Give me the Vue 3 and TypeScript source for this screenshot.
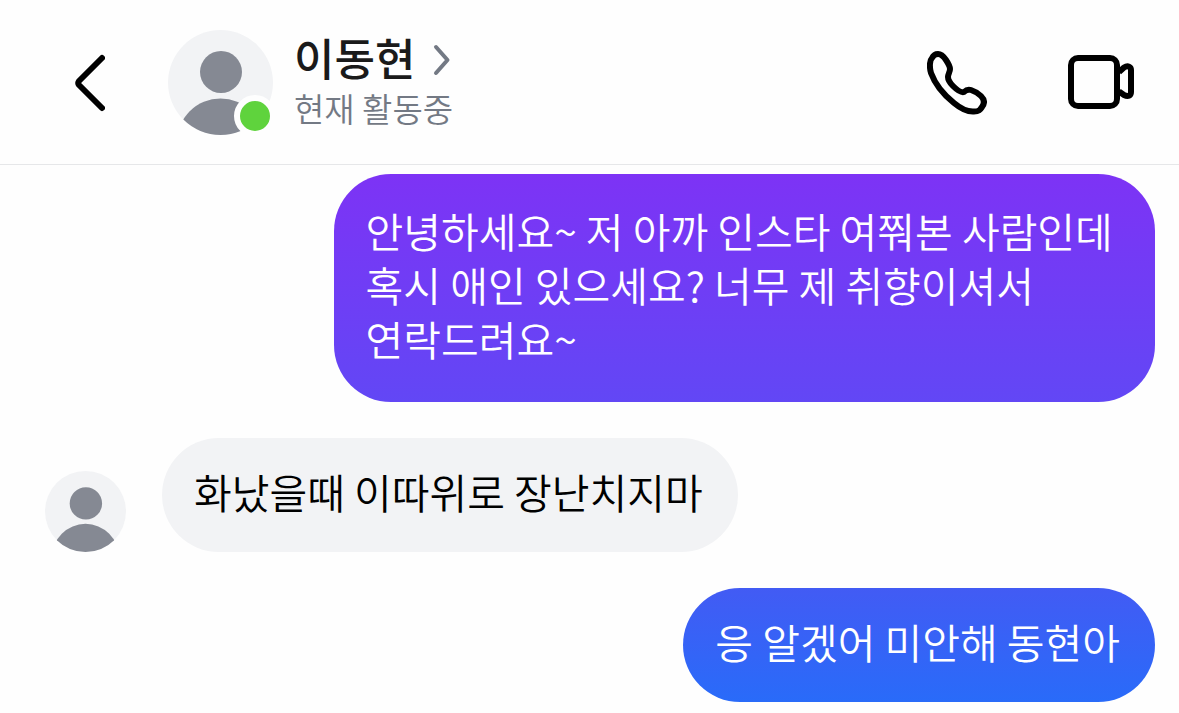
<script setup lang="ts">
interface Message {
  id: number
  from: 'me' | 'them'
  tone: string
  text: string
}

const contact = { name: '이동현', status: '현재 활동중' }

const messages: Message[] = [
  {
    id: 1,
    from: 'me',
    tone: 'violet',
    text: '안녕하세요~ 저 아까 인스타 여쭤본 사람인데 혹시 애인 있으세요? 너무 제 취향이셔서 연락드려요~',
  },
  { id: 2, from: 'them', tone: 'gray', text: '화났을때 이따위로 장난치지마' },
  { id: 3, from: 'me', tone: 'blue', text: '응 알겠어 미안해 동현아' },
]
</script>

<template>
  <div class="chat">
    <header class="topbar">
      <button class="icon-button" type="button" aria-label="뒤로">
        <svg width="30" height="58" viewBox="0 0 30 58" fill="none" stroke="#000" stroke-width="6" stroke-linecap="round" stroke-linejoin="round">
          <path d="M27 4 L4 27 Q2.500 29 4 31 L27 54" />
        </svg>
      </button>

      <div class="avatar">
        <svg class="avatar-image" viewBox="0 0 105 105" aria-hidden="true">
          <defs>
            <clipPath id="avatar-clip"><circle cx="52.500" cy="52.500" r="52.500" /></clipPath>
          </defs>
          <circle cx="52.500" cy="52.500" r="52.500" fill="#f2f3f5" />
          <g clip-path="url(#avatar-clip)" fill="#858993">
            <circle cx="53" cy="42" r="21" />
            <circle cx="52.500" cy="112" r="43.500" />
          </g>
        </svg>
        <span class="presence"></span>
      </div>

      <div class="identity">
        <button class="name" type="button">
          <span>{{ contact.name }}</span>
          <svg width="18" height="32" viewBox="0 0 18 32" fill="none" stroke="#737984" stroke-width="4" stroke-linecap="round" stroke-linejoin="round" aria-hidden="true">
            <path d="M3 3 L14.500 16 L3 29" />
          </svg>
        </button>
        <span class="status">{{ contact.status }}</span>
      </div>

      <div class="actions">
        <button class="icon-button" type="button" aria-label="음성 통화">
          <svg width="60" height="64" viewBox="0 0 60 64" fill="none" stroke="#000" stroke-width="6" stroke-linecap="round" stroke-linejoin="round">
            <path d="M11 3 C15 3 17 6 19 9 C21 12 23 16 23 18 C23 21 21 23 21 26 C21 29 23 32 26 35 C30 39 34 42 37 41 C39 39 41 38 44 39 C47 40 51 42 54 45 C57 48 58 52 55 56 C53 59 52 60.500 47 60.500 C40 61 33 57 27 52 C17 44 8 33 4 22 C2 15 3 9 5 7 C6 5 8 3 11 3 Z" />
          </svg>
        </button>
        <button class="icon-button" type="button" aria-label="영상 통화">
          <svg width="66" height="56" viewBox="0 0 66 56" fill="none" stroke="#000" stroke-width="6" stroke-linejoin="round">
            <rect x="3" y="3" width="46" height="48" rx="7" />
            <path d="M51 17 L56 12.500 C60 10 63 12 63 15 V37 C63 41 60 42 56 40 L51 36.500" />
          </svg>
        </button>
      </div>
    </header>

    <main class="thread">
      <div v-for="message in messages" :key="message.id" class="row" :class="message.from">
        <svg v-if="message.from === 'them'" class="sender" viewBox="0 0 105 105" aria-hidden="true">
          <circle cx="52.500" cy="52.500" r="52.500" fill="#f2f3f5" />
          <g clip-path="url(#avatar-clip)" fill="#858993">
            <circle cx="53" cy="42" r="21" />
            <circle cx="52.500" cy="112" r="43.500" />
          </g>
        </svg>
        <p class="bubble" :class="message.tone">{{ message.text }}</p>
      </div>
    </main>
  </div>
</template>

<style>
body {
  margin: 0;
  background: #fefefe;
}
</style>

<style scoped>
.chat {
  font-family: "Noto Sans CJK KR", "Noto Sans", sans-serif;
  color: #000;
}

button {
  padding: 0;
  border: 0;
  background: none;
  color: inherit;
  font: inherit;
  cursor: pointer;
}

svg {
  display: block;
  flex-shrink: 0;
}

.topbar {
  display: flex;
  align-items: center;
  padding: 30px 45px 29px 75px;
  border-bottom: 1px solid #e6e7e9;
}

.avatar {
  position: relative;
  width: 105px;
  height: 105px;
  margin-left: 63px;
}

.avatar-image {
  width: 100%;
  height: 100%;
}

.presence {
  position: absolute;
  right: -3px;
  bottom: -2px;
  width: 30px;
  height: 30px;
  border: 6px solid #fefefe;
  border-radius: 50%;
  background: #5fd33d;
}

.identity {
  display: flex;
  flex-direction: column;
  align-items: flex-start;
  margin-left: 21px;
  padding-bottom: 3px;
}

.name {
  display: flex;
  align-items: flex-end;
  gap: 18px;
  color: #1a1a1a;
  font-size: 44px;
  font-weight: 500;
  line-height: 54px;
}

.name svg {
  margin-bottom: 8px;
}

.status {
  color: #737984;
  font-size: 33px;
  font-weight: 350;
  line-height: 48px;
}

.actions {
  display: flex;
  align-items: center;
  gap: 81px;
  margin-left: auto;
}

.thread {
  display: flex;
  flex-direction: column;
  gap: 36px;
  padding: 9px 24px 11px 45px;
}

.row {
  display: flex;
  align-items: flex-end;
  gap: 36px;
}

.row.me {
  justify-content: flex-end;
}

.sender {
  width: 81px;
  height: 81px;
}

.bubble {
  box-sizing: border-box;
  max-width: 74%;
  margin: 0;
  padding: 26px 35px 34px 32px;
  border-radius: 57px;
  font-size: 41px;
  font-weight: 350;
  line-height: 54px;
  word-break: keep-all;
}

.violet {
  padding-block: 29px 37px;
  background: linear-gradient(#7d33f5, #6247f5);
  color: #fff;
}

.gray {
  background: #f2f3f5;
}

.blue {
  background: linear-gradient(#425bf4, #296bf9);
  color: #fff;
}
</style>
